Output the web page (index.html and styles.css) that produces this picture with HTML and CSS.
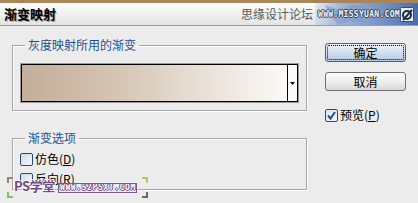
FILE: index.html
```html
<!DOCTYPE html>
<html lang="zh">
<head>
<meta charset="utf-8">
<link rel="stylesheet" href="styles.css">
</head>
<body>
<div class="dialog">
  <div class="titlebar">
    <span class="title">渐变映射</span>
    <span class="brand">思缘设计论坛</span>
    <span class="banner">
      <svg class="wing" width="60" height="22" viewBox="0 0 60 22"><path d="M4 2 L22 8 L30 2 L44 4 L36 12 L48 20 L28 18 L18 22 L10 14 Z" fill="#7f9bc6" opacity="0.6"/></svg>
      <span class="url">WWW.MISSYUAN.COM</span>
      <svg class="logo" width="14" height="15" viewBox="0 0 14 15"><rect x="0.5" y="0.5" width="13" height="14" rx="1" fill="#e8edf5" stroke="#3a4c6c"/><circle cx="7" cy="8" r="4" fill="none" stroke="#1a2a44" stroke-width="2"/><path d="M3 13 L12 3" stroke="#1a2a44" stroke-width="2"/></svg>
    </span>
  </div>
  <div class="content">
    <div class="left">
      <fieldset class="group g1">
        <legend>灰度映射所用的渐变</legend>
        <div class="swatch">
          <div class="grad"></div>
          <div class="drop"><svg width="5" height="3" viewBox="0 0 5 3"><path d="M0 0 H5 L2.5 3 Z" fill="#000"/></svg></div>
        </div>
      </fieldset>
      <fieldset class="group g2">
        <legend>渐变选项</legend>
        <label class="check"><span class="box"></span>仿色(<u>D</u>)</label>
        <label class="check"><span class="box"></span>反向(<u>R</u>)</label>
      </fieldset>
    </div>
    <div class="right">
      <button class="btn ok"><span class="focus">确定</span></button>
      <button class="btn">取消</button>
      <label class="check preview"><span class="box on"><svg width="11" height="11" viewBox="0 0 11 11"><path d="M2 5.5 L4.5 8.5 L9 2" fill="none" stroke="#1d4f9a" stroke-width="2"/></svg></span>预览(<u>P</u>)</label>
    </div>
  </div>
  <div class="watermark">
    <span class="mk tl"></span><span class="mk bl"></span><span class="mk tr"></span><span class="mk br"></span>
    <span class="ps">PS学堂</span><span class="wurl">WWW.52PSXT.COM</span>
  </div>
</div>
</body>
</html>
```
FILE: styles.css
```css
* { box-sizing: border-box; }
html, body { margin: 0; padding: 0; }
body {
  width: 418px;
  height: 203px;
  overflow: hidden;
  background: #ececec;
  font-family: "Noto Sans CJK SC", "DejaVu Sans", sans-serif;
  font-size: 12px;
  color: #000;
}
.dialog { position: relative; width: 418px; height: 203px; }

.titlebar {
  height: 26px;
  border-top: 3px solid #a98558;
  border-bottom: 1px solid #9e9e9e;
  background: linear-gradient(#ffffff, #f2f2f2 40%, #e4e4e4);
  display: flex;
  align-items: center;
}
.title {
  margin-left: 4px;
  font-weight: bold;
  font-size: 13px;
  line-height: 16px;
  text-shadow: 1px 1px 0 #9a9a9a;
}
.brand {
  margin-left: 185px;
  font-size: 12px;
  color: #5a5a5a;
  line-height: 16px;
}
.banner {
  position: relative;
  margin-left: 2px;
  flex: 1;
  height: 22px;
  display: flex;
  align-items: center;
  background: linear-gradient(90deg, rgba(150,176,214,0.2), #9fb6d8 25%, #6f8fc0 70%, #4a6ca6);
}
.wing { position: absolute; left: 6px; top: 0; }
.url {
  position: relative;
  margin-left: 3px;
  font-family: "DejaVu Sans Mono", monospace;
  font-weight: bold;
  font-size: 8px;
  letter-spacing: 0.3px;
  color: #f4f6fa;
  text-shadow: -1px 0 #2c3e5c, 1px 0 #2c3e5c, 0 -1px #2c3e5c, 0 1px #2c3e5c;
}
.logo { position: relative; margin-left: 0px; }

.content { display: flex; }
.left { margin-left: 12px; width: 295px; }
.right { margin-left: 18px; width: 81px; padding-top: 17px; display: flex; flex-direction: column; }

.group {
  margin: 0;
  padding: 0 7px;
  border: 1px solid #a6a6a6;
  box-shadow: 1px 1px 0 #fff, inset 1px 1px 0 #fff;
  min-width: 0;
}
.group legend {
  margin-left: 5px;
  padding: 0 3px;
  color: #1c4f93;
  font-size: 12px;
  line-height: 14px;
}
.g1 { margin-top: 12px; padding-bottom: 7px; }
.g2 { margin-top: 20px; padding-top: 4px; padding-bottom: 0; }

.swatch {
  margin-top: 11px;
  height: 40px;
  width: 279px;
  border: 1px solid #9a9a9a;
  display: flex;
}
.grad {
  flex: 1;
  border: 1px solid #000;
  border-right: none;
  background: linear-gradient(90deg, #c3ae99, #d4c4b3 35%, #eae2d9 70%, #fbf9f6);
}
.drop {
  width: 11px;
  border: 1px solid #000;
  background: #fbfaf8;
  display: flex;
  align-items: center;
  justify-content: center;
  padding-top: 1px;
}

.check {
  display: flex;
  align-items: center;
  height: 20px;
  line-height: 14px;
  font-size: 12px;
}
.check u { text-underline-offset: 1px; }
.box {
  width: 13px;
  height: 13px;
  margin-right: 2px;
  border: 1px solid #1e4e7e;
  border-radius: 2px;
  background: linear-gradient(135deg, #d6dbe2, #f6f7f8);
  display: flex;
  align-items: center;
  justify-content: center;
}
.box.on { background: linear-gradient(135deg, #dce6f2, #f4f7fb); }

.btn {
  width: 81px;
  height: 19px;
  padding: 0;
  border: 1px solid #6f6f6f;
  border-radius: 3px;
  background: linear-gradient(#fdfdfd, #eeeeee 50%, #d8d8d8);
  font-family: inherit;
  font-size: 12px;
  line-height: 14px;
  color: #000;
  display: flex;
  align-items: center;
  justify-content: center;
}
.btn + .btn { margin-top: 10px; }
.btn.ok {
  border-color: #4a5f7a;
  background: linear-gradient(#f0f5fb, #d2dfef 50%, #b6cbe3);
  padding: 1px;
}
.focus {
  width: 100%;
  height: 100%;
  border: 1px dotted #000;
  border-radius: 2px;
  display: flex;
  align-items: center;
  justify-content: center;
}
.preview { margin-top: 15px; height: 18px; }
.preview .box { margin-right: 2px; }

.watermark {
  position: absolute;
  left: 7px;
  top: 177px;
  width: 141px;
  height: 21px;
}
.mk {
  position: absolute;
  width: 6px;
  height: 6px;
  border: 2px solid #9aa67a;
}
.mk.tl { left: 0; top: 0; border-right: none; border-bottom: none; border-color: #a08070; }
.mk.bl { left: 0; bottom: 0; border-right: none; border-top: none; border-color: #7fbf6f; }
.mk.tr { right: 0; top: 0; border-left: none; border-bottom: none; border-color: #c8c060; }
.mk.br { right: 0; bottom: 0; border-left: none; border-top: none; border-color: #6a6a5a; }
.ps {
  position: absolute;
  left: 7px;
  top: 1px;
  font-size: 13px;
  letter-spacing: -0.5px;
  line-height: 16px;
  color: #6e4a8a;
  font-weight: bold;
  text-shadow: -1px 0 #fff, 1px 0 #fff, 0 -1px #fff, 0 1px #fff;
}
.wurl {
  position: absolute;
  left: 51px;
  top: 6px;
  width: 79px;
  height: 10px;
  padding: 0 1px;
  background: #f0eaf4;
  border: 1px solid #7a5a8a;
  font-family: "DejaVu Sans Mono", monospace;
  font-size: 8px;
  line-height: 8px;
  letter-spacing: 0.6px;
  font-weight: bold;
  color: #fff;
  white-space: nowrap;
  overflow: hidden;
  text-shadow: -1px 0 #6e4a8a, 1px 0 #6e4a8a, 0 -1px #6e4a8a, 0 1px #6e4a8a;
}
```
